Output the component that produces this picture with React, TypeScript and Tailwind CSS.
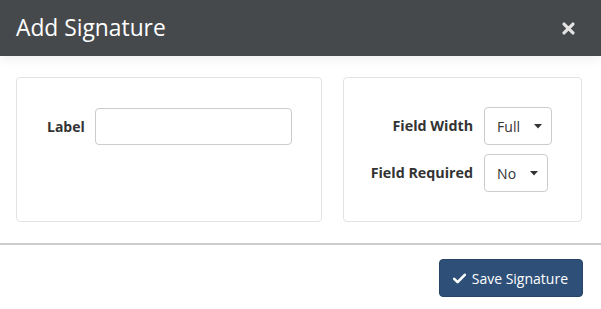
import React from 'react';

function Caret() {
  return (
    <svg width="8" height="5" viewBox="0 0 8 5" className="shrink-0">
      <path d="M0 0h8L4 4.5z" fill="#333" />
    </svg>
  );
}

function Select({ value }: { value: string }) {
  return (
    <div className="flex h-[38px] items-center gap-[14px] rounded-[4px] border border-[#cccccc] bg-white pl-[12px] pr-[9px] text-[14px] text-[#333]">
      <span>{value}</span>
      <Caret />
    </div>
  );
}

export default function App() {
  return (
    <div className="h-[309px] w-[601px] overflow-hidden bg-white font-['Open_Sans',sans-serif] text-[#333]">
      {/* Header */}
      <header className="relative flex h-[56px] items-center justify-between bg-[#46494c] pl-4 pr-[26px] shadow-[0_4px_10px_rgba(0,0,0,0.06)]">
        <h1 className="text-[22.8px] leading-none text-white">Add Signature</h1>
        <svg width="13" height="13" viewBox="0 0 14 14" className="mt-[1px]">
          <path d="M2.2 2.2l9.6 9.6M11.8 2.2l-9.6 9.6" stroke="#e4e4e4" strokeWidth="3.4" strokeLinecap="round" />
        </svg>
      </header>

      {/* Body */}
      <section className="grid grid-cols-[306px_239px] gap-[21px] pl-4 pt-[21px] pb-[21px]">
        <div className="h-[145px] rounded-[4px] border border-[#e3e3e3] pl-[30px] pt-[30px]">
          <div className="flex items-center gap-[10px]">
            <label className="text-[14px] font-bold">Label</label>
            <input className="h-[37px] w-[197px] rounded-[4px] border border-[#cccccc] px-3 text-[14px] outline-none" />
          </div>
        </div>
        <div className="flex h-[145px] items-center justify-end rounded-[4px] border border-[#e3e3e3] pr-[29px]">
          <div className="grid grid-cols-[auto_auto] items-center gap-x-[11px] gap-y-[9px]">
            <span className="text-right text-[14.3px] font-bold">Field Width</span>
            <div className="justify-self-start">
              <Select value="Full" />
            </div>
            <span className="text-right text-[14.3px] font-bold">Field Required</span>
            <div className="justify-self-start">
              <Select value="No" />
            </div>
          </div>
        </div>
      </section>

      {/* Footer */}
      <footer className="flex justify-end border-t-2 border-[#cccccc] pr-[18px] pt-[14px]">
        <button className="flex h-[38px] items-center gap-[6px] rounded-[4px] border border-[#274569] bg-[#2e5078] pl-[13px] pr-[14px] text-[14px] text-white">
          <svg width="13" height="11" viewBox="0 0 13 11">
            <path d="M1.2 5.8l3.4 3.4L11.8 1.8" fill="none" stroke="#fff" strokeWidth="2.6" strokeLinecap="round" strokeLinejoin="round" />
          </svg>
          Save Signature
        </button>
      </footer>
    </div>
  );
}
